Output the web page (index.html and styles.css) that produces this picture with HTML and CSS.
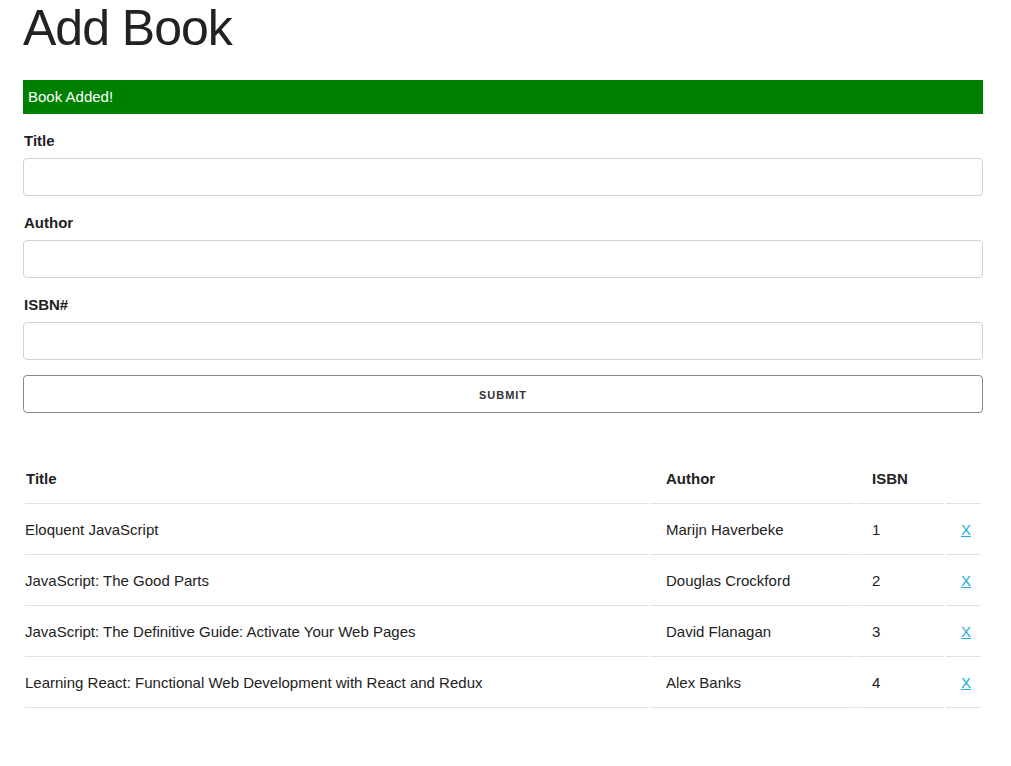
FILE: index.html
```html
<!DOCTYPE html>
<html>
<head>
<meta charset="utf-8">
<link rel="stylesheet" href="styles.css">
</head>
<body>
<div class="container">
  <h1 class="page-title">Add Book</h1>
  <div class="alert success">Book Added!</div>
  <form class="book-form">
    <label class="field-label" for="title">Title</label>
    <input class="field-input" type="text" id="title">
    <label class="field-label" for="author">Author</label>
    <input class="field-input" type="text" id="author">
    <label class="field-label" for="isbn">ISBN#</label>
    <input class="field-input" type="text" id="isbn">
    <input class="submit-btn" type="submit" value="Submit">
  </form>
  <table class="book-table">
    <thead>
      <tr>
        <th class="col-title">Title</th>
        <th class="col-author">Author</th>
        <th class="col-isbn">ISBN</th>
        <th class="col-del"></th>
      </tr>
    </thead>
    <tbody>
      <tr><td>Eloquent JavaScript</td><td>Marijn Haverbeke</td><td>1</td><td><a href="#" class="delete">X</a></td></tr>
      <tr><td>JavaScript: The Good Parts</td><td>Douglas Crockford</td><td>2</td><td><a href="#" class="delete">X</a></td></tr>
      <tr><td>JavaScript: The Definitive Guide: Activate Your Web Pages</td><td>David Flanagan</td><td>3</td><td><a href="#" class="delete">X</a></td></tr>
      <tr><td>Learning React: Functional Web Development with React and Redux</td><td>Alex Banks</td><td>4</td><td><a href="#" class="delete">X</a></td></tr>
    </tbody>
  </table>
</div>
</body>
</html>
```
FILE: styles.css
```css
html, body {
  margin: 0;
  padding: 0;
  background: #fff;
}
body {
  font-family: "Liberation Sans", Arial, sans-serif;
  font-size: 15px;
  line-height: 1.6;
  color: #222;
}
.container {
  width: 960px;
  margin-left: 23px;
}
.page-title {
  font-size: 50px;
  font-weight: 400;
  letter-spacing: -1px;
  line-height: 56px;
  margin: 0 0 24px 0;
}
.alert {
  padding: 5px;
  color: #fff;
  margin-bottom: 15px;
}
.success {
  background: #008000;
}
.book-form {
  display: flex;
  flex-direction: column;
  margin: 0 0 25px 0;
}
.field-label {
  display: block;
  font-weight: 700;
  margin-bottom: 5px;
  padding-left: 1px;
  line-height: 24px;
}
.field-input {
  box-sizing: border-box;
  width: 100%;
  height: 38px;
  padding: 6px 10px;
  border: 1px solid #d1d1d1;
  border-radius: 4px;
  background: #fff;
  margin: 0 0 15px 0;
  font: inherit;
}
.submit-btn {
  box-sizing: border-box;
  width: 100%;
  height: 38px;
  padding: 0 30px;
  margin: 0 0 15px 0;
  border: 1px solid #888;
  border-radius: 4px;
  background: transparent;
  color: #333;
  font-family: "Liberation Sans", Arial, sans-serif;
  font-size: 11px;
  font-weight: 700;
  letter-spacing: 1px;
  text-transform: uppercase;
  line-height: 38px;
  text-align: center;
}
.book-table {
  width: 960px;
  border-spacing: 2px;
  margin: 0;
  table-layout: fixed;
}
.book-table th,
.book-table td {
  padding: 12px 15px;
  text-align: left;
  border-bottom: 1px solid #e1e1e1;
  line-height: 24px;
  white-space: nowrap;
}
.book-table th {
  font-weight: 700;
}
.book-table th:first-child {
  padding-left: 1px;
}
.book-table td:first-child {
  padding-left: 0;
}
.book-table th:last-child,
.book-table td:last-child {
  padding-right: 0;
}
.col-title { width: 608px; }
.col-author { width: 174px; }
.col-isbn { width: 57px; }
.col-del { width: 20px; }
.delete {
  color: #1eaedb;
}
```
